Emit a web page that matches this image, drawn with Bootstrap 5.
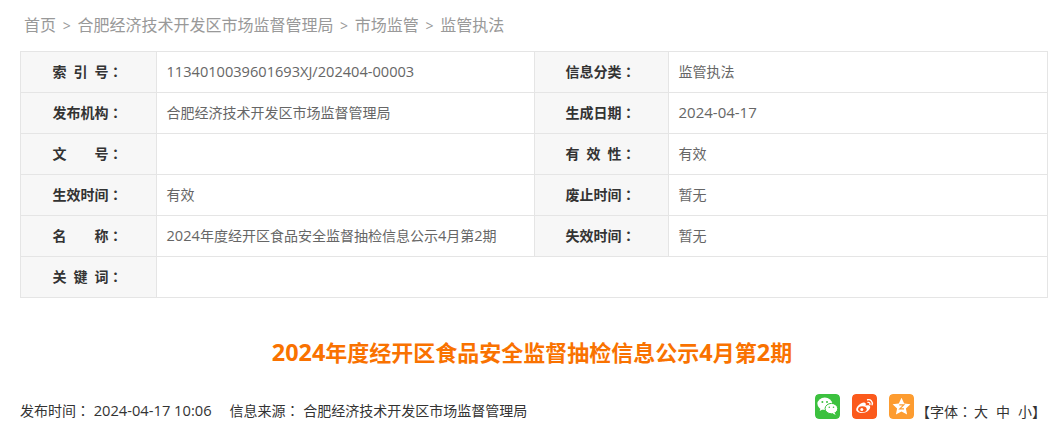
<!DOCTYPE html>
<html lang="zh-CN"><head><meta charset="utf-8">
<link href="https://cdn.jsdelivr.net/npm/bootstrap@5.3.0/dist/css/bootstrap.min.css" rel="stylesheet">
<style>
html,body{height:432px;overflow:hidden}
body{font-family:"Open Sans","Noto Sans CJK SC",sans-serif;font-size:14px;color:#333;background:#fff}
.cl{font-family:"Noto Sans CJK TC",sans-serif}
.crumbs{height:51px;padding-left:24px;font-size:16px;color:#999;line-height:51px}
.crumbs i{font-style:normal;margin:0 6.7px;font-size:14px}
.meta{margin:0 16px 0 20px;width:1028px;border-collapse:collapse;table-layout:fixed}
.meta td,.meta th{border:1px solid #e5e5e5;height:41px;padding:0 10px 2px 9.5px;font-size:14px;line-height:19px;vertical-align:middle}
.meta th{background:#f7f7f7;text-align:center;font-weight:700;color:#333;padding-right:11px;padding-left:9px}
.meta td{color:#666}
.n15{font-size:15px}.n146{font-size:14.6px}.n147{font-size:14.7px}.n23{font-size:23.4px}
.ttl{margin:0;padding-top:40px;height:97px;text-align:center;font-size:22px;font-weight:700;color:#f97200;line-height:28px;font-family:"Open Sans","Noto Sans CJK SC",sans-serif}
.foot{margin:0 18px 0 20px;height:44px}
.src{margin-left:18px}
.info{padding-top:4px;white-space:pre}
.acts{gap:12px;margin-top:-1px}
.ico{width:25px;height:25px;border-radius:4px;display:block}
.sizer{padding-top:7px;margin-left:-10px}
.sz{margin-left:8px}.sz0{margin-left:2px}
</style></head><body>
<div class="crumbs">首页<i>&gt;</i>合肥经济技术开发区市场监督管理局<i>&gt;</i>市场监管<i>&gt;</i>监管执法</div>
<table class="meta"><colgroup><col style="width:136px"><col style="width:378px"><col style="width:134px"><col></colgroup>
<tr><th>索&ensp;引&ensp;号<span class="cl" lang="zh-TW">：</span></th><td><span class="n146">1134010039601693XJ/202404-00003</span></td><th>信息分类<span class="cl" lang="zh-TW">：</span></th><td>监管执法</td></tr>
<tr><th>发布机构<span class="cl" lang="zh-TW">：</span></th><td>合肥经济技术开发区市场监督管理局</td><th>生成日期<span class="cl" lang="zh-TW">：</span></th><td><span class="n15">2024-04-17</span></td></tr>
<tr><th>文&ensp;&ensp;&ensp;&ensp;号<span class="cl" lang="zh-TW">：</span></th><td></td><th>有&ensp;效&ensp;性<span class="cl" lang="zh-TW">：</span></th><td>有效</td></tr>
<tr><th>生效时间<span class="cl" lang="zh-TW">：</span></th><td>有效</td><th>废止时间<span class="cl" lang="zh-TW">：</span></th><td>暂无</td></tr>
<tr><th>名&ensp;&ensp;&ensp;&ensp;称<span class="cl" lang="zh-TW">：</span></th><td><span class="n146">2024</span>年度经开区食品安全监督抽检信息公示<span class="n146">4</span>月第<span class="n146">2</span>期</td><th>失效时间<span class="cl" lang="zh-TW">：</span></th><td>暂无</td></tr>
<tr><th>关&ensp;键&ensp;词<span class="cl" lang="zh-TW">：</span></th><td colspan="3"></td></tr>
</table>
<h1 class="ttl"><span class="n23">2024</span>年度经开区食品安全监督抽检信息公示<span class="n23">4</span>月第<span class="n23">2</span>期</h1>
<div class="foot d-flex justify-content-between align-items-start">
<div class="info">发布时间<span class="cl" lang="zh-TW">：</span> <span class="n147">2024-04-17 10:06</span><span class="src">信息来源<span class="cl" lang="zh-TW">：</span> 合肥经济技术开发区市场监督管理局</span></div>
<div class="acts d-flex align-items-start">
<svg class="ico" viewBox="0 0 25 25" role="img" aria-label="微信"><rect width="25" height="25" rx="4" fill="#3cc13f"/><ellipse cx="9.8" cy="9.8" rx="7.4" ry="6.2" fill="#fff"/><path d="M5.5 14l-.8 3 3.2-1.7z" fill="#fff"/><ellipse cx="16.4" cy="14.6" rx="6.3" ry="5.2" fill="#fff" stroke="#3cc13f" stroke-width="1"/><path d="M19.5 18.5l1.2 2.4-3.2-1.6z" fill="#fff"/><circle cx="7.4" cy="8.1" r="1" fill="#3cc13f"/><circle cx="12" cy="8.1" r="1" fill="#3cc13f"/><circle cx="14.3" cy="13.3" r=".8" fill="#3cc13f"/><circle cx="18.5" cy="13.3" r=".8" fill="#3cc13f"/></svg>
<svg class="ico" viewBox="0 0 25 25" role="img" aria-label="微博"><rect width="25" height="25" rx="4" fill="#fb5a1c"/><path d="M4.2 15.8c0-3.2 4.6-7.2 7.6-7.2 2 0 2.4 1.5 1.8 3.2 2.4-.9 4.6-.6 4.6 1.5 0 2.8-4.2 5.7-8 5.7-3.2 0-6-1.4-6-3.2z" fill="#fff"/><ellipse cx="10.4" cy="15.3" rx="4.3" ry="3" fill="#fb5a1c"/><circle cx="9.8" cy="15.4" r="1.5" fill="#fff"/><path d="M15.6 5.8c3-.7 5.6 2 4.5 5M16 8.4c1.4-.3 2.3.9 1.9 2.2" fill="none" stroke="#fff" stroke-width="1.4" stroke-linecap="round"/></svg>
<svg class="ico" viewBox="0 0 25 25" role="img" aria-label="收藏"><rect width="25" height="25" rx="4" fill="#fd9c30"/><path d="M12.5 3.8l2.7 5.7 6.2.8-4.5 4.2 1.2 6.1-5.6-3-5.6 3 1.2-6.1-4.5-4.2 6.2-.8z" fill="#fff"/><path d="M10.3 10.9h4.6l-4.2 4h4.3" fill="none" stroke="#fd9c30" stroke-width="1.1"/></svg>
<div class="sizer">【字体<span class="cl" lang="zh-TW">：</span><span class="sz0">大</span><span class="sz">中</span><span class="sz">小</span>】</div>
</div>
</div>
</body></html>
